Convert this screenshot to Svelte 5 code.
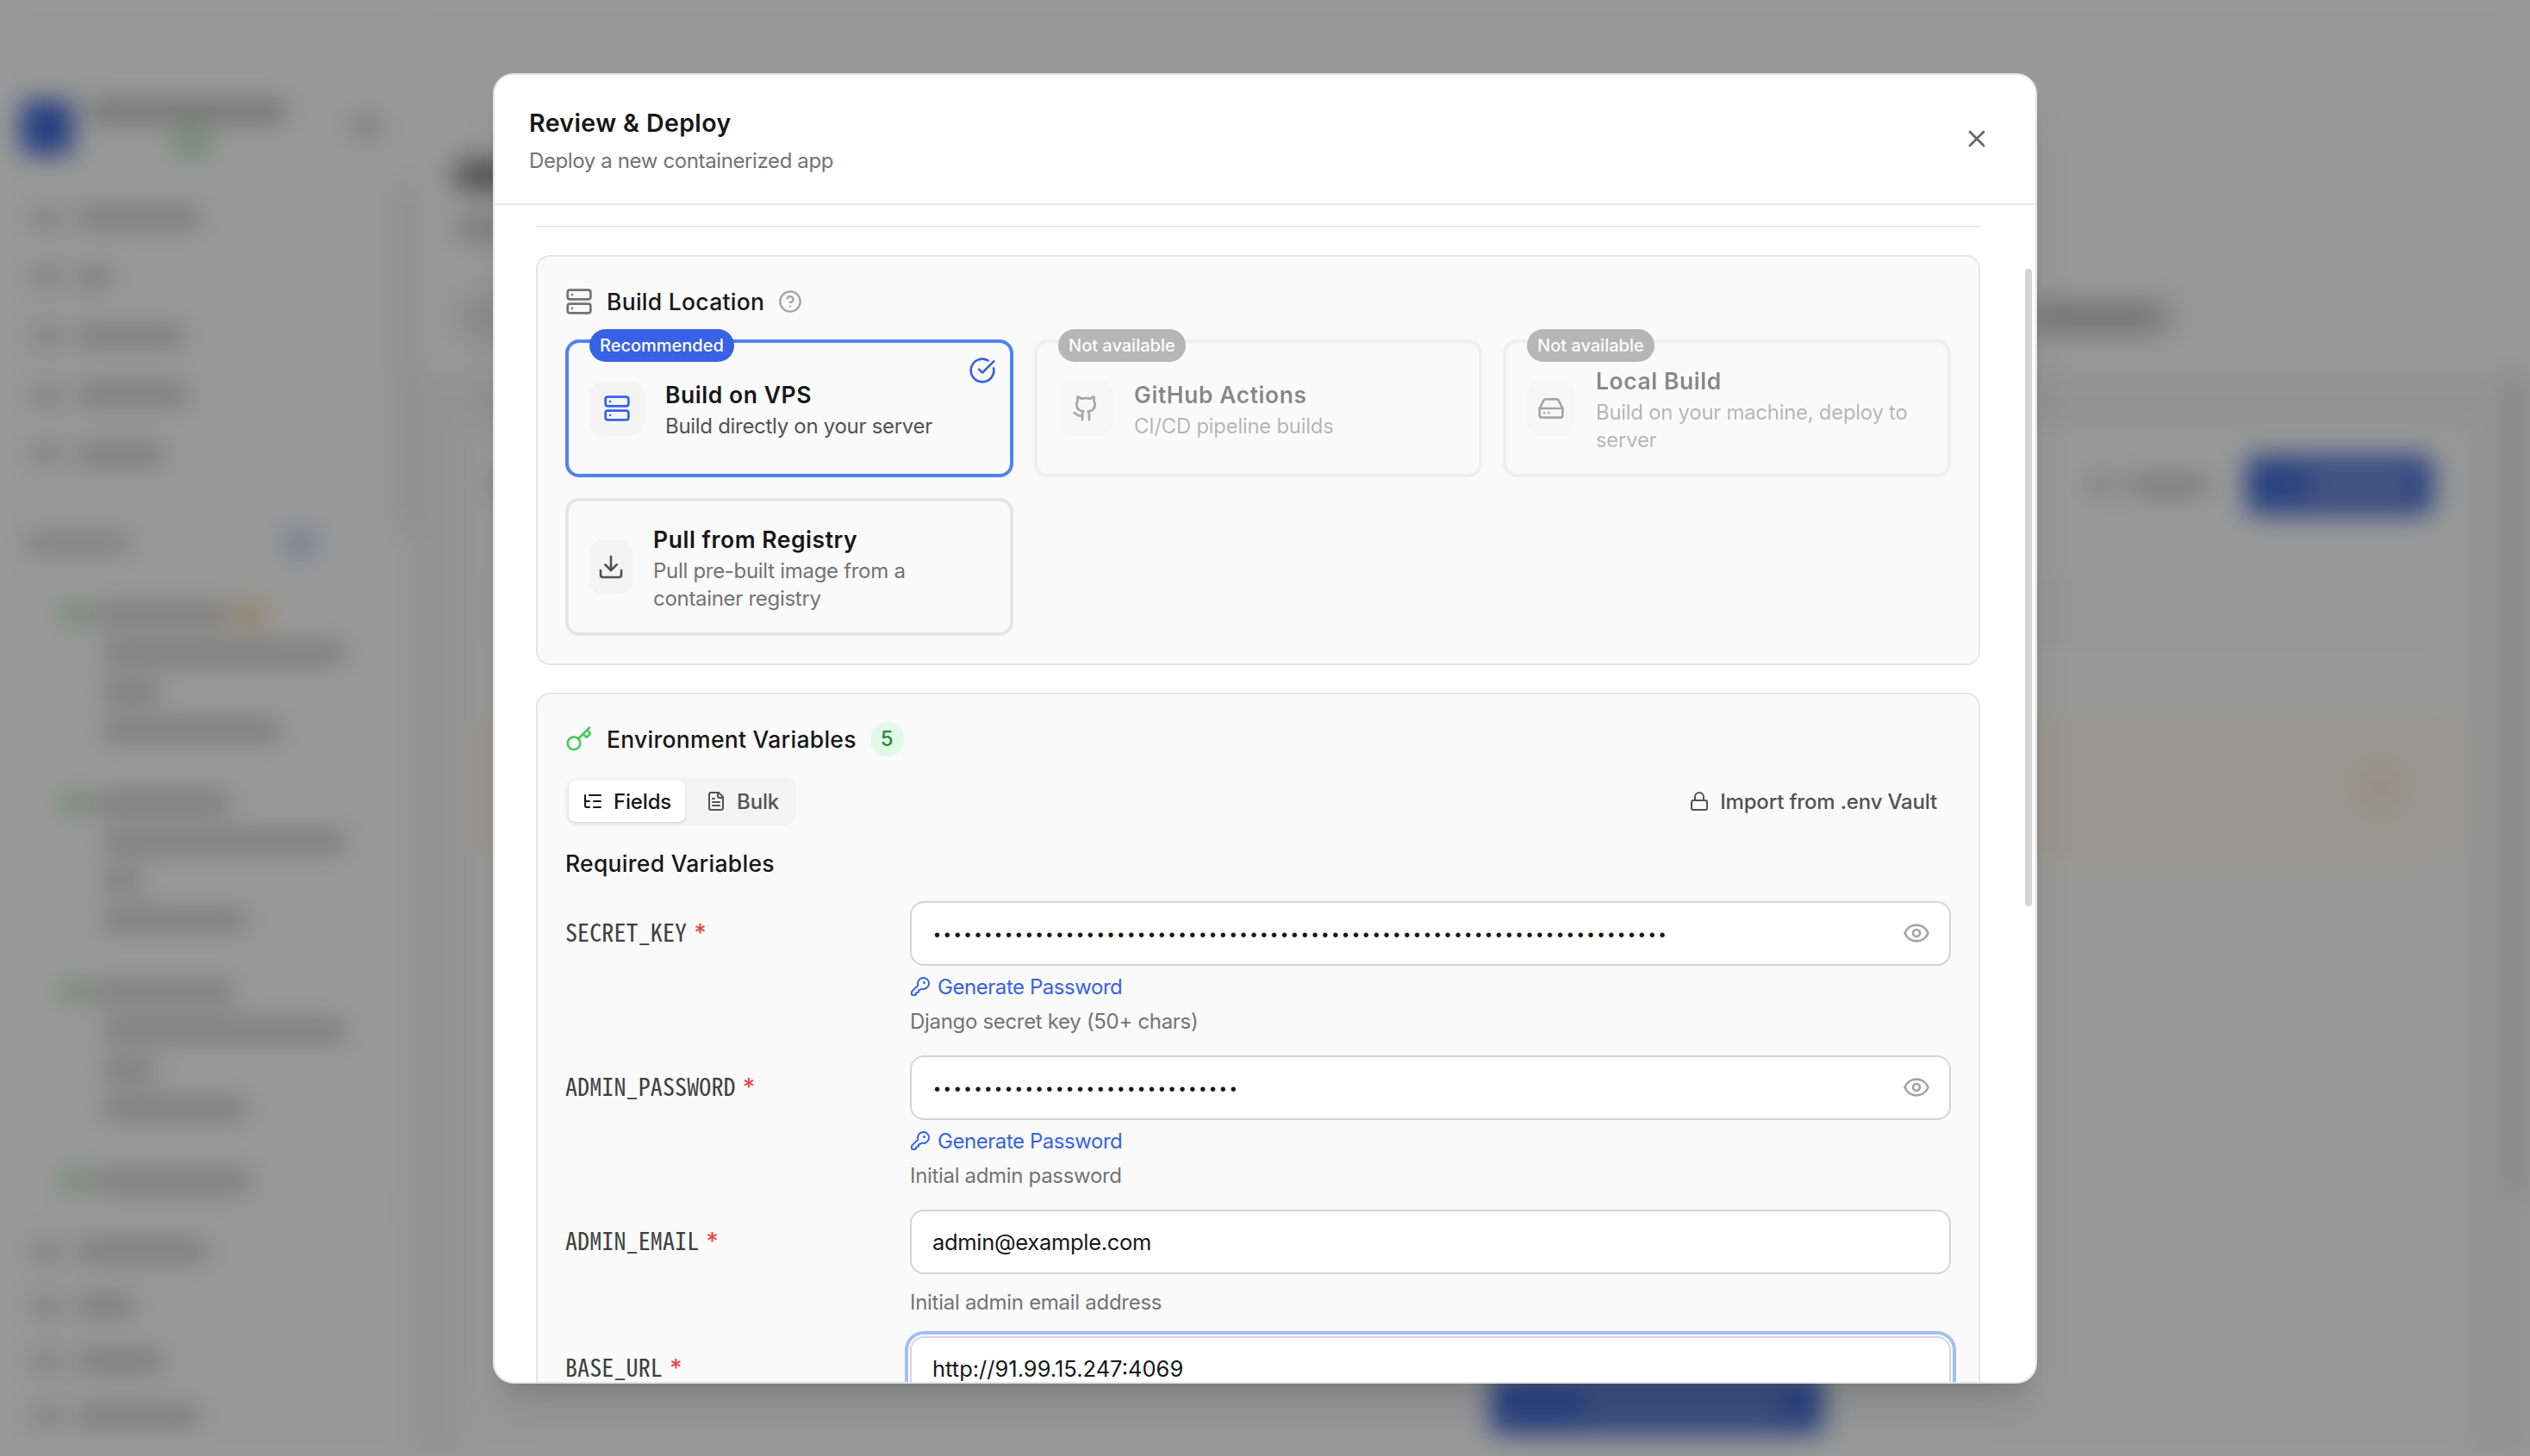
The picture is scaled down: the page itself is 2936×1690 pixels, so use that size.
<script>
	const icons = {
		close: '<path d="M18 6 6 18"/><path d="m6 6 12 12"/>',
		server:
			'<rect width="20" height="8" x="2" y="2" rx="2"/><rect width="20" height="8" x="2" y="14" rx="2"/><path d="M6 6h.01"/><path d="M6 18h.01"/>',
		help: '<circle cx="12" cy="12" r="10"/><path d="M9.09 9a3 3 0 0 1 5.83 1c0 2-3 3-3 3"/><path d="M12 17h.01"/>',
		check: '<path d="M21.801 10A10 10 0 1 1 17 3.335"/><path d="m9 11 3 3L22 4"/>',
		github:
			'<path d="M15 22v-4a4.8 4.8 0 0 0-1-3.5c3 0 6-2 6-5.5.08-1.25-.27-2.48-1-3.5.28-1.15.28-2.35 0-3.5 0 0-1 0-3 1.5-2.64-.5-5.36-.5-8 0C6 2 5 2 5 2c-.3 1.15-.3 2.35 0 3.5A5.403 5.403 0 0 0 4 9c0 3.5 3 5.5 6 5.5-.39.49-.68 1.05-.85 1.65-.17.6-.22 1.23-.15 1.85v4"/><path d="M9 18c-4.51 2-5-2-7-2"/>',
		drive:
			'<path d="M22 12H2"/><path d="M5.45 5.11 2 12v6a2 2 0 0 0 2 2h16a2 2 0 0 0 2-2v-6l-3.45-6.89A2 2 0 0 0 16.76 4H7.24a2 2 0 0 0-1.79 1.11z"/><path d="M6 16h.01"/><path d="M10 16h.01"/>',
		download:
			'<path d="M21 15v4a2 2 0 0 1-2 2H5a2 2 0 0 1-2-2v-4"/><path d="m7 10 5 5 5-5"/><path d="M12 15V3"/>',
		key: '<path d="m15.5 7.5 2.3 2.3a1 1 0 0 0 1.4 0l2.1-2.1a1 1 0 0 0 0-1.4L19 4"/><path d="m21 2-9.6 9.6"/><circle cx="7.5" cy="15.5" r="5.5"/>',
		keyRound:
			'<path d="M2.586 17.414A2 2 0 0 0 2 18.828V21a1 1 0 0 0 1 1h3a1 1 0 0 0 1-1v-1a1 1 0 0 1 1-1h1a1 1 0 0 0 1-1v-1a1 1 0 0 1 1-1h.172a2 2 0 0 0 1.414-.586l.814-.814a6.5 6.5 0 1 0-4-4z"/><circle cx="16.5" cy="7.5" r=".5" fill="currentColor"/>',
		tree: '<path d="M8 5h13"/><path d="M13 12h8"/><path d="M13 19h8"/><path d="M3 10a2 2 0 0 0 2 2h3"/><path d="M3 5v12a2 2 0 0 0 2 2h3"/>',
		file: '<path d="M15 2H6a2 2 0 0 0-2 2v16a2 2 0 0 0 2 2h12a2 2 0 0 0 2-2V7Z"/><path d="M14 2v4a2 2 0 0 0 2 2h4"/><path d="M10 9H8"/><path d="M16 13H8"/><path d="M16 17H8"/>',
		lock: '<rect width="18" height="11" x="3" y="11" rx="2"/><path d="M7 11V7a5 5 0 0 1 10 0v4"/>',
		eye: '<path d="M2.062 12.348a1 1 0 0 1 0-.696 10.75 10.75 0 0 1 19.876 0 1 1 0 0 1 0 .696 10.75 10.75 0 0 1-19.876 0"/><circle cx="12" cy="12" r="3"/>'
	};

	const locations = [
		{ id: 'vps', icon: 'server', title: 'Build on VPS', text: 'Build directly on your server', badge: 'Recommended', tile: 64 },
		{ id: 'github', icon: 'github', title: 'GitHub Actions', text: 'CI/CD pipeline builds', badge: 'Not available', disabled: true, tile: 64 },
		{ id: 'local', icon: 'drive', title: 'Local Build', text: 'Build on your machine, deploy to server', badge: 'Not available', disabled: true, tile: 56 },
		{ id: 'registry', icon: 'download', title: 'Pull from Registry', text: 'Pull pre-built image from a container registry', tile: 50 }
	];

	const variables = [
		{ name: 'SECRET_KEY', value: '•'.repeat(72), secret: true, hint: 'Django secret key (50+ chars)' },
		{ name: 'ADMIN_PASSWORD', value: '•'.repeat(30), secret: true, hint: 'Initial admin password' },
		{ name: 'ADMIN_EMAIL', value: 'admin@example.com', email: true, hint: 'Initial admin email address' },
		{ name: 'BASE_URL', value: 'http://91.99.15.247:4069' }
	];

	// skeleton widths of the page behind the dialog
	const nav = [142, 38, 122, 128, 100];
	const groups = [
		[154, 280, 65, 205],
		[157, 280, 45, 165],
		[160, 280, 60, 165]
	];
	const footer = [150, 65, 100, 140];

	let selected = $state('vps');
	let tab = $state('fields');
</script>

{#snippet icon(name)}
	<svg class="icon" viewBox="0 0 24 24" fill="none" stroke="currentColor" stroke-width="2" stroke-linecap="round" stroke-linejoin="round">
		{@html icons[name]}
	</svg>
{/snippet}

<div class="screen">
	<div class="page" aria-hidden="true">
		<div class="sidebar">
			<div class="brand">
				<div class="logo"></div>
				<div class="brand-text">
					<div class="bar dark" style="width: 228px"></div>
					<div class="status"></div>
				</div>
				<div class="toggle"></div>
			</div>
			{#each nav as width}
				<div class="nav-row">
					<div class="glyph"></div>
					<div class="bar" style="width: {width}px"></div>
				</div>
			{/each}
			<div class="section-label">
				<div class="bar light"></div>
				<div class="count"></div>
			</div>
			{#each groups as group, g}
				<div class="group">
					{#each group as width, i}
						<div class="line" class:first={i == 0}>
							{#if i == 0}<div class="dot"></div>{/if}
							<div class="bar" style="width: {width}px"></div>
							{#if g == 0 && i == 0}<div class="warn"></div>{/if}
						</div>
					{/each}
				</div>
			{/each}
			<div class="line first">
				<div class="dot"></div>
				<div class="bar" style="width: 180px"></div>
			</div>
			<div class="sidebar-footer">
				{#each footer as width}
					<div class="nav-row">
						<div class="glyph"></div>
						<div class="bar" style="width: {width}px"></div>
					</div>
				{/each}
			</div>
		</div>
		<div class="scroll-strip"></div>
		<div class="content">
			<div class="content-head">
				<div class="page-title"></div>
				<div class="bar page-sub"></div>
				<div class="page-tabs"><div class="bar dark"></div></div>
			</div>
			<div class="content-body">
				<div class="card">
					<div class="toolbar">
						<div class="bar" style="width: 200px"></div>
						<div class="toolbar-right">
							<div class="bar" style="width: 24px"></div>
							<div class="bar" style="width: 92px"></div>
							<div class="blue-button"><div></div></div>
						</div>
					</div>
					<div class="search"></div>
					<div class="notice"><div></div></div>
					<div class="blue-button bottom"><div></div></div>
				</div>
				<div class="page-scroll"></div>
			</div>
		</div>
	</div>

	<div class="overlay">
		<div class="modal" role="dialog" aria-label="Review & Deploy">
			<header>
				<div>
					<h2>Review &amp; Deploy</h2>
					<p>Deploy a new containerized app</p>
				</div>
				<button class="close" aria-label="Close">{@render icon('close')}</button>
			</header>
			<div class="body">
				<hr />
				<section>
					<div class="section-head">
						<span class="head-icon">{@render icon('server')}</span>
						<h3>Build Location</h3>
						<span class="help">{@render icon('help')}</span>
					</div>
					<div class="cards">
						{#each locations as loc (loc.id)}
							<button
								class="option"
								class:selected={selected == loc.id}
								class:disabled={loc.disabled}
								onclick={() => {
									if (!loc.disabled) selected = loc.id;
								}}
							>
								{#if loc.badge}
									<span class="badge">{loc.badge}</span>
								{/if}
								<span class="tile" style="width: {loc.tile}px">{@render icon(loc.icon)}</span>
								<span class="option-text">
									<span class="option-title">{loc.title}</span>
									<span class="option-desc">{loc.text}</span>
								</span>
								{#if selected == loc.id}
									<span class="check">{@render icon('check')}</span>
								{/if}
							</button>
						{/each}
					</div>
				</section>

				<section class="env">
					<div class="section-head">
						<span class="head-icon green">{@render icon('key')}</span>
						<h3>Environment Variables</h3>
						<span class="total">5</span>
					</div>
					<div class="tools">
						<div class="tabs">
							<button class:active={tab == 'fields'} onclick={() => (tab = 'fields')}>
								{@render icon('tree')}<span>Fields</span>
							</button>
							<button class:active={tab == 'bulk'} onclick={() => (tab = 'bulk')}>
								{@render icon('file')}<span>Bulk</span>
							</button>
						</div>
						<button class="import">{@render icon('lock')}<span>Import from .env Vault</span></button>
					</div>
					<h4>Required Variables</h4>
					<div class="rows">
						{#each variables as v (v.name)}
							<div class="row">
								<div class="label">{v.name}<span class="star">*</span></div>
								<div class="field">
									<div class="input" class:focus={v.name == 'BASE_URL'}>
										<span class:dots={v.secret} class:email={v.email}>{v.value}</span>
										{#if v.secret}<span class="eye">{@render icon('eye')}</span>{/if}
									</div>
									{#if v.secret}
										<div class="generate">{@render icon('keyRound')}<span>Generate Password</span></div>
									{/if}
									{#if v.hint}
										<p class="hint" class:spaced={!v.secret}>{v.hint}</p>
									{/if}
								</div>
							</div>
						{/each}
					</div>
				</section>
			</div>
			<div class="scrollbar"></div>
		</div>
	</div>
</div>

<style>
	:global(body) {
		margin: 0;
		overflow: hidden;
	}
	.screen,
	.screen :global(*) {
		box-sizing: border-box;
	}
	.screen {
		position: relative;
		width: 2936px;
		height: 1690px;
		overflow: hidden;
		background: #fefefe;
		color: #171717;
		font-family: Inter, 'Liberation Sans', sans-serif;
	}
	h2,
	h3,
	h4,
	p {
		margin: 0;
	}
	button {
		font: inherit;
		color: inherit;
		letter-spacing: inherit;
		background: none;
		border: none;
		padding: 0;
		text-align: left;
	}
	.icon {
		display: block;
		flex: none;
		width: 32px;
		height: 32px;
	}

	/* page behind the dialog */
	.page {
		display: flex;
		width: 100%;
		height: 100%;
		background: #fefefe;
		filter: blur(15px);
	}
	.bar {
		height: 22px;
		background: #c6c6c6;
		border-radius: 4px;
	}
	.bar.dark {
		background: #b4b4b4;
	}
	.bar.light {
		width: 122px;
		background: #d0d0d0;
	}
	.sidebar {
		width: 464px;
		flex: none;
	}
	.brand {
		display: flex;
		height: 219px;
		padding: 116px 26px 0 24px;
	}
	.logo {
		width: 64px;
		height: 64px;
		border-radius: 12px;
		background: #4068d6;
		margin-right: 18px;
	}
	.brand-text {
		padding-top: 2px;
	}
	.status {
		width: 44px;
		height: 24px;
		margin: 14px 0 0 98px;
		border-radius: 8px;
		background: #a6dcb3;
	}
	.toggle {
		width: 28px;
		height: 26px;
		margin: 18px 0 0 80px;
		background: #c8c8c8;
	}
	.nav-row {
		display: flex;
		align-items: center;
		gap: 20px;
		height: 68.4px;
		padding-left: 38px;
	}
	.glyph {
		width: 32px;
		height: 26px;
		border-radius: 6px;
		background: #d2d2d2;
	}
	.section-label {
		display: flex;
		justify-content: space-between;
		align-items: center;
		height: 129px;
		padding: 9px 98px 0 30px;
	}
	.count {
		width: 36px;
		height: 34px;
		border-radius: 14px;
		background: #c8d0f4;
	}
	.group {
		margin-bottom: 38px;
	}
	.line {
		display: flex;
		align-items: center;
		height: 45.3px;
		padding-left: 120px;
	}
	.line.first {
		padding-left: 76px;
		gap: 12px;
	}
	.dot {
		width: 22px;
		height: 22px;
		border-radius: 8px;
		background: #98d0a2;
	}
	.warn {
		width: 28px;
		height: 26px;
		border-radius: 8px;
		background: #f4cd8c;
	}
	.sidebar-footer {
		margin-top: 8px;
		padding-top: 17px;
		border-top: 2px solid #e5e5e5;
	}
	.sidebar-footer .nav-row {
		height: 63.9px;
	}
	.scroll-strip {
		width: 14px;
		flex: none;
		height: 400px;
		margin-top: 214px;
		background: #e4e4e4;
	}
	.content {
		flex: 1;
		border-left: 2px solid #eee;
	}
	.content-head {
		height: 434px;
		padding: 186px 408px 0 48px;
	}
	.page-title {
		width: 300px;
		height: 34px;
		background: #858585;
	}
	.page-sub {
		width: 500px;
		margin-top: 34px;
	}
	.page-tabs {
		display: flex;
		align-items: center;
		justify-content: flex-end;
		height: 54px;
		margin-top: 65px;
		padding-right: 24px;
		border-radius: 12px;
		background: #eaeaea;
	}
	.page-tabs .bar {
		width: 140px;
	}
	.content-body {
		display: flex;
		height: 1256px;
		padding: 62px 0 0 60px;
		background: #f4f4f4;
	}
	.card {
		flex: 1;
		margin-right: 46px;
		padding: 32px 34px;
		background: #fefefe;
	}
	.toolbar,
	.toolbar-right {
		display: flex;
		align-items: center;
		justify-content: space-between;
	}
	.toolbar-right {
		gap: 20px;
		margin-right: 6px;
	}
	.blue-button {
		display: flex;
		align-items: center;
		justify-content: flex-end;
		width: 218px;
		height: 70px;
		margin-left: 24px;
		padding-right: 26px;
		border-radius: 14px;
		background: #4970d6;
	}
	.blue-button div {
		width: 120px;
		height: 22px;
		background: #8ca2dc;
	}
	.search {
		height: 84px;
		margin: 68px -4px 0;
		background: #fafafa;
	}
	.notice {
		display: flex;
		align-items: center;
		justify-content: flex-end;
		height: 164px;
		margin: 82px -10px 0;
		padding-right: 60px;
		border-radius: 16px;
		background: #fefaed;
	}
	.notice div {
		width: 36px;
		height: 36px;
		border-radius: 18px;
		background: #fbe8d2;
	}
	.blue-button.bottom {
		width: 388px;
		margin: 599px 0 0 1155px;
		padding-right: 50px;
	}
	.blue-button.bottom div {
		width: 230px;
		height: 16px;
	}
	.page-scroll {
		width: 26px;
		height: 951px;
		margin-top: -62px;
		background: #e2e2e2;
	}

	/* dialog */
	.overlay {
		position: absolute;
		inset: 0;
		display: flex;
		align-items: center;
		justify-content: center;
		background: rgba(0, 0, 0, 0.4);
	}
	.modal {
		position: relative;
		display: flex;
		flex-direction: column;
		width: 1792px;
		height: 1521px;
		overflow: hidden;
		border: 2px solid #e5e5e5;
		border-radius: 24px;
		background: #fff;
		box-shadow:
			0 40px 50px -10px rgba(0, 0, 0, 0.1),
			0 16px 20px -12px rgba(0, 0, 0, 0.1);
	}
	header {
		display: flex;
		align-items: center;
		justify-content: space-between;
		flex: none;
		height: 151px;
		padding: 2px 52px 0 40px;
		border-bottom: 2px solid #e5e5e5;
	}
	h2 {
		font-size: 28.5px;
		font-weight: 600;
		letter-spacing: 0.4px;
		line-height: 44px;
	}
	header p {
		margin-top: 6px;
		font-size: 24px;
		letter-spacing: -0.38px;
		line-height: 32px;
		color: #737373;
	}
	.close {
		margin-top: -2px;
		color: #666;
	}
	.close :global(.icon) {
		width: 32px;
		height: 32px;
	}
	.body {
		flex: 1;
		min-height: 0;
		overflow: hidden;
		padding: 24px 64px 0 48px;
	}
	hr {
		height: 2px;
		margin: 0 0 32px;
		border: none;
		background: #e5e5e5;
	}
	section {
		padding: 32px;
		border: 2px solid #e5e5e5;
		border-radius: 16px;
		background: #fafafa;
	}
	.env {
		margin-top: 32px;
	}
	.section-head {
		display: flex;
		align-items: center;
		height: 40px;
		gap: 16px;
	}
	.head-icon {
		color: #737373;
	}
	.green {
		color: #4ac95f;
	}
	h3,
	h4 {
		font-size: 26.5px;
		font-weight: 500;
		letter-spacing: 0.28px;
		line-height: 40px;
		white-space: nowrap;
	}
	.help {
		color: #a3a3a3;
	}
	.help :global(.icon) {
		width: 28px;
		height: 28px;
	}
	.total {
		width: 39px;
		height: 40px;
		border-radius: 20px;
		background: #e0fae7;
		color: #2f8540;
		font-size: 24px;
		font-weight: 500;
		line-height: 40px;
		text-align: center;
	}
	.cards {
		display: grid;
		grid-template-columns: repeat(3, 1fr);
		gap: 24px;
		margin-top: 24px;
	}
	.option {
		position: relative;
		display: flex;
		align-items: center;
		gap: 24px;
		height: 160px;
		padding: 0 24px;
		border: 4px solid #e5e5e5;
		border-radius: 16px;
	}
	.option.selected {
		border-color: #4f82f0;
	}
	.option.disabled {
		opacity: 0.5;
	}
	.badge {
		position: absolute;
		top: -16px;
		left: 24px;
		height: 38px;
		padding: 0 12px;
		border-radius: 19px;
		background: #737373;
		color: #fff;
		font-size: 20px;
		font-weight: 500;
		line-height: 38px;
		white-space: nowrap;
	}
	.selected .badge {
		background: #3761e6;
	}
	.tile {
		display: flex;
		align-items: center;
		justify-content: center;
		flex: none;
		height: 64px;
		border-radius: 16px;
		background: #f4f4f4;
		color: #525252;
	}
	.selected .tile,
	.check {
		color: #3761e6;
	}
	.option-text {
		display: flex;
		flex-direction: column;
		padding-top: 2px;
	}
	.option-title {
		font-size: 26.5px;
		font-weight: 600;
		letter-spacing: 0.55px;
		line-height: 41px;
	}
	.option-desc {
		font-size: 24px;
		letter-spacing: -0.3px;
		line-height: 32px;
		color: #737373;
	}
	.selected .option-desc {
		color: #525252;
	}
	.check {
		position: absolute;
		top: 16px;
		right: 16px;
	}
	.tools {
		display: flex;
		align-items: center;
		justify-content: space-between;
		margin: 24px 0;
		font-size: 24px;
		font-weight: 500;
		letter-spacing: -0.17px;
		color: #525252;
	}
	.tools span {
		padding-top: 1px;
	}
	.tools :global(.icon) {
		width: 24px;
		height: 24px;
	}
	.tabs {
		display: flex;
		gap: 8px;
		height: 56px;
		padding: 4px;
		border-radius: 14px;
		background: #f4f4f4;
	}
	.tools button {
		display: flex;
		align-items: center;
		gap: 12px;
		padding: 0 16px;
	}
	.tabs .active {
		border-radius: 8px;
		background: #fff;
		color: #171717;
		box-shadow: 0 2px 4px rgba(0, 0, 0, 0.12);
	}
	.rows {
		display: flex;
		flex-direction: column;
		gap: 24px;
		margin-top: 24px;
	}
	.row {
		display: flex;
	}
	.label {
		width: 400px;
		flex: none;
		height: 75px;
		color: #404040;
		font-family: 'Noto Sans Mono CJK SC', 'Noto Sans Mono CJK JP', 'DejaVu Sans Mono', monospace;
		font-size: 28px;
		letter-spacing: 0.12px;
		line-height: 71px;
	}
	.star {
		margin-left: 8px;
		color: #ef4444;
		font-family: Inter, sans-serif;
		font-size: 28px;
		font-weight: 500;
	}
	.field {
		flex: 1;
	}
	.input {
		display: flex;
		align-items: center;
		justify-content: space-between;
		height: 75px;
		padding: 0 22px 0 24px;
		border: 2px solid #d4d4d4;
		border-radius: 16px;
		background: #fff;
		font-size: 25.5px;
		white-space: nowrap;
	}
	.input.focus {
		box-shadow:
			0 0 0 2px #fff,
			0 0 0 6px #a3bdf5;
	}
	.dots {
		padding: 4px 0 0 2px;
		font-family: 'Liberation Sans', sans-serif;
		font-size: 20px;
		letter-spacing: 4.85px;
	}
	.email {
		letter-spacing: -0.3px;
	}
	.eye {
		color: #a3a3a3;
	}
	.generate {
		display: flex;
		align-items: center;
		gap: 8px;
		height: 33px;
		margin-top: 8px;
		font-size: 24px;
		letter-spacing: -0.45px;
		color: #3761e6;
	}
	.generate :global(.icon) {
		width: 24px;
		height: 24px;
	}
	.hint {
		margin-top: 8px;
		font-size: 24px;
		letter-spacing: -0.32px;
		line-height: 31.3px;
		color: #737373;
	}
	.hint.spaced {
		margin-top: 17px;
		letter-spacing: -0.28px;
	}
	.scrollbar {
		position: absolute;
		top: 225px;
		right: 4px;
		width: 8px;
		height: 740px;
		border-radius: 4px;
		background: #d4d4d4;
	}
</style>
